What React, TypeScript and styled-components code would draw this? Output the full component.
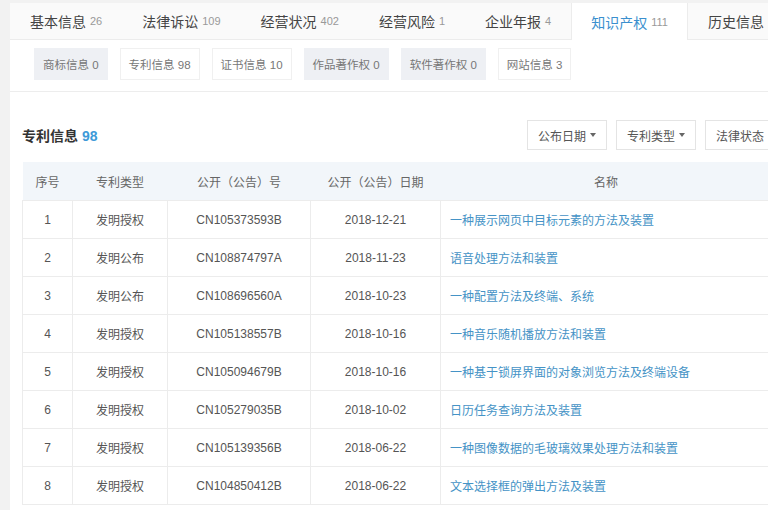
import React from "react";
import styled, { createGlobalStyle } from "styled-components";

const GlobalStyle = createGlobalStyle`
  html, body {
    margin: 0;
    padding: 0;
    background: #f2f2f2;
    overflow: hidden;
  }
  body {
    font-family: "Liberation Sans", "Noto Sans CJK SC", sans-serif;
    color: #555;
  }
`;

const Page = styled.div`
  width: 800px;
  padding: 3px 0 0 10px;
`;

const Panel = styled.div`
  background: #ffffff;
  min-height: 520px;
`;

const TabBar = styled.div`
  display: flex;
  height: 36px;
  background: #fafafa;
  border-bottom: 1px solid #ececec;
`;

const Tab = styled.div<{ $active?: boolean }>`
  display: flex;
  align-items: center;
  padding: 0 19px;
  font-size: 14px;
  white-space: nowrap;
  color: ${(p) => (p.$active ? "#3a8fce" : "#444")};
  background: ${(p) => (p.$active ? "#ffffff" : "transparent")};
  border-left: 1px solid ${(p) => (p.$active ? "#ececec" : "transparent")};
  border-right: 1px solid ${(p) => (p.$active ? "#ececec" : "transparent")};
  margin-bottom: ${(p) => (p.$active ? "-1px" : "0")};
`;

const Count = styled.span`
  font-size: 11px;
  color: #999;
  margin-left: 4px;
`;

const SubBar = styled.div`
  display: flex;
  gap: 12px;
  padding: 8px 0 11px 24px;
  border-bottom: 1px solid #ededed;
`;

const Chip = styled.div<{ $filled?: boolean }>`
  height: 32px;
  box-sizing: border-box;
  display: flex;
  align-items: center;
  padding: 0 8px;
  font-size: 11.5px;
  color: #777;
  white-space: nowrap;
  background: ${(p) => (p.$filled ? "#eef0f4" : "#ffffff")};
  border: 1px solid ${(p) => (p.$filled ? "#eef0f4" : "#f0f0f0")};
`;

const Section = styled.div`
  padding: 28px 25px 0 12px;
`;

const HeadRow = styled.div`
  display: flex;
  align-items: center;
  justify-content: space-between;
  height: 30px;
`;

const Title = styled.div`
  font-size: 14px;
  font-weight: bold;
  color: #333;
`;

const TitleCount = styled.span`
  color: #3d9ad8;
  margin-left: 4px;
`;

const Filters = styled.div`
  display: flex;
  gap: 9px;
`;

const FilterButton = styled.div`
  height: 30px;
  box-sizing: border-box;
  display: flex;
  align-items: center;
  gap: 4px;
  padding: 0 10px;
  font-size: 12px;
  color: #555;
  border: 1px solid #e4e4e4;
  background: #fff;
  white-space: nowrap;
`;

const Caret = styled.span`
  width: 0;
  height: 0;
  border-left: 3px solid transparent;
  border-right: 3px solid transparent;
  border-top: 4px solid #666;
`;

const Table = styled.table`
  margin-top: 12px;
  width: 750px;
  border-collapse: collapse;
  table-layout: fixed;
  font-size: 12px;
`;

const Th = styled.th<{ $w?: number }>`
  width: ${(p) => (p.$w ? `${p.$w}px` : "auto")};
  height: 38px;
  background: #f2f6fa;
  font-weight: normal;
  color: #666;
  text-align: center;
  padding: 0;
`;

const Td = styled.td<{ $link?: boolean }>`
  height: 37px;
  border: 1px solid #ececec;
  text-align: ${(p) => (p.$link ? "left" : "center")};
  padding: ${(p) => (p.$link ? "0 0 0 9px" : "0")};
  color: ${(p) => (p.$link ? "#4593c6" : "#555")};
  white-space: nowrap;
`;

const rows = [
  ["1", "发明授权", "CN105373593B", "2018-12-21", "一种展示网页中目标元素的方法及装置"],
  ["2", "发明公布", "CN108874797A", "2018-11-23", "语音处理方法和装置"],
  ["3", "发明公布", "CN108696560A", "2018-10-23", "一种配置方法及终端、系统"],
  ["4", "发明授权", "CN105138557B", "2018-10-16", "一种音乐随机播放方法和装置"],
  ["5", "发明授权", "CN105094679B", "2018-10-16", "一种基于锁屏界面的对象浏览方法及终端设备"],
  ["6", "发明授权", "CN105279035B", "2018-10-02", "日历任务查询方法及装置"],
  ["7", "发明授权", "CN105139356B", "2018-06-22", "一种图像数据的毛玻璃效果处理方法和装置"],
  ["8", "发明授权", "CN104850412B", "2018-06-22", "文本选择框的弹出方法及装置"],
];

const tabs: [string, string | null, boolean?][] = [
  ["基本信息", "26"],
  ["法律诉讼", "109"],
  ["经营状况", "402"],
  ["经营风险", "1"],
  ["企业年报", "4"],
  ["知识产权", "111", true],
  ["历史信息", null],
];

const chips: [string, boolean][] = [
  ["商标信息 0", true],
  ["专利信息 98", false],
  ["证书信息 10", false],
  ["作品著作权 0", true],
  ["软件著作权 0", true],
  ["网站信息 3", false],
];

export default function App() {
  return (
    <Page>
      <GlobalStyle />
      <Panel>
        <TabBar>
          {tabs.map(([label, count, active]) => (
            <Tab key={label} $active={active}>
              {label}
              {count && <Count>{count}</Count>}
            </Tab>
          ))}
        </TabBar>
        <SubBar>
          {chips.map(([label, filled]) => (
            <Chip key={label} $filled={filled}>
              {label}
            </Chip>
          ))}
        </SubBar>
        <Section>
          <HeadRow>
            <Title>
              专利信息<TitleCount>98</TitleCount>
            </Title>
            <Filters>
              <FilterButton>
                公布日期 <Caret />
              </FilterButton>
              <FilterButton>
                专利类型 <Caret />
              </FilterButton>
              <FilterButton>
                法律状态 <Caret />
              </FilterButton>
            </Filters>
          </HeadRow>
          <Table>
            <thead>
              <tr>
                <Th $w={50}>序号</Th>
                <Th $w={95}>专利类型</Th>
                <Th $w={143}>公开（公告）号</Th>
                <Th $w={130}>公开（公告）日期</Th>
                <Th>名称</Th>
              </tr>
            </thead>
            <tbody>
              {rows.map((r) => (
                <tr key={r[0]}>
                  <Td>{r[0]}</Td>
                  <Td>{r[1]}</Td>
                  <Td>{r[2]}</Td>
                  <Td>{r[3]}</Td>
                  <Td $link>{r[4]}</Td>
                </tr>
              ))}
            </tbody>
          </Table>
        </Section>
      </Panel>
    </Page>
  );
}
